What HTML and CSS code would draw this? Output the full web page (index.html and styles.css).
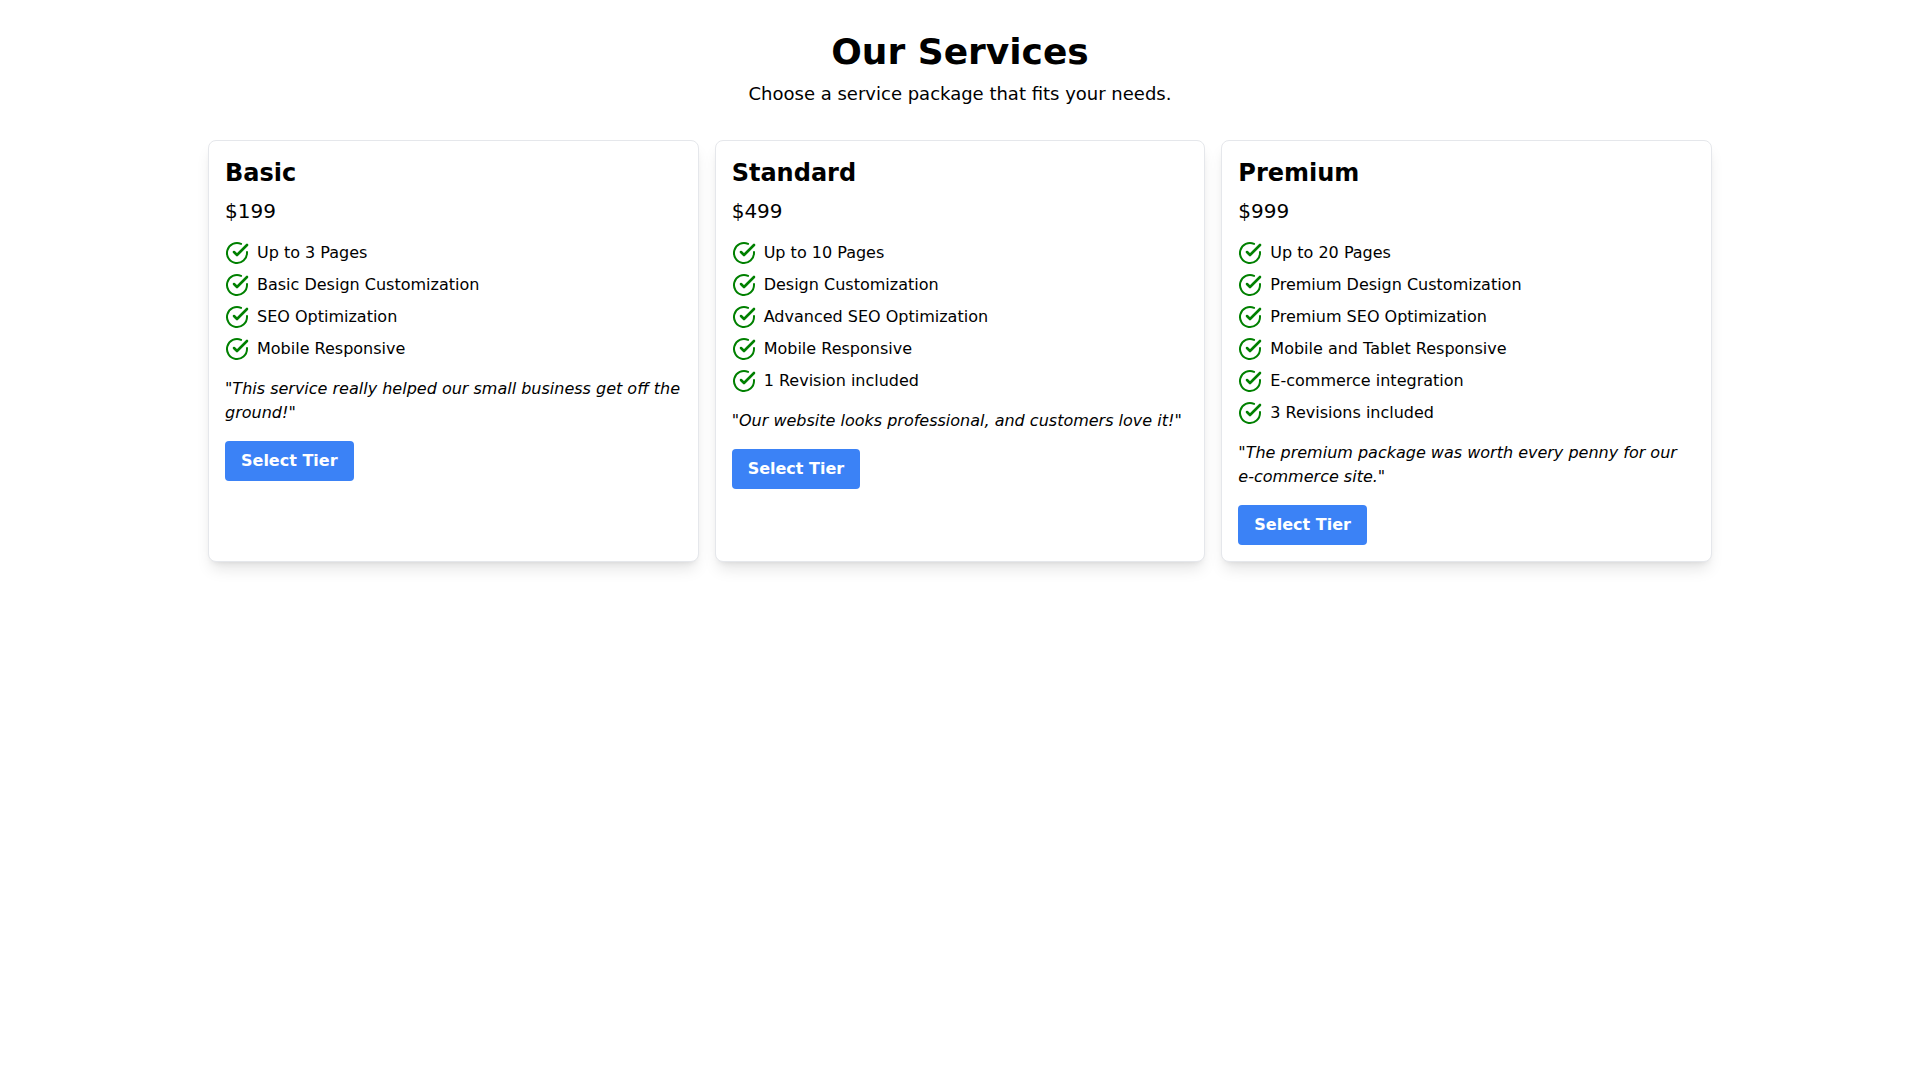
FILE: index.html
```html
<!DOCTYPE html>
<html>
<head>
    <title>Our Services</title>
    <link rel="stylesheet" href="styles.css">
</head>
<body>
    <svg class="icon-defs" width="0" height="0">
        <symbol id="check-circle" viewBox="0 0 24 24">
            <path d="M22 11.08V12a10 10 0 1 1-5.93-9.14"></path>
            <polyline class="tick" points="22 4 12 14.01 9 11.01"></polyline>
        </symbol>
    </svg>
    <div class="container">
        <h1>Our Services</h1>
        <p class="subtitle">Choose a service package that fits your needs.</p>
        <div class="cards">
            <div class="card">
                <h2>Basic</h2>
                <p class="price">$199</p>
                <ul class="features">
                    <li><svg class="check"><use href="#check-circle"></use></svg>Up to 3 Pages</li>
                    <li><svg class="check"><use href="#check-circle"></use></svg>Basic Design Customization</li>
                    <li><svg class="check"><use href="#check-circle"></use></svg>SEO Optimization</li>
                    <li><svg class="check"><use href="#check-circle"></use></svg>Mobile Responsive</li>
                </ul>
                <p class="quote">"This service really helped our small business get off the ground!"</p>
                <button>Select Tier</button>
            </div>
            <div class="card">
                <h2>Standard</h2>
                <p class="price">$499</p>
                <ul class="features">
                    <li><svg class="check"><use href="#check-circle"></use></svg>Up to 10 Pages</li>
                    <li><svg class="check"><use href="#check-circle"></use></svg>Design Customization</li>
                    <li><svg class="check"><use href="#check-circle"></use></svg>Advanced SEO Optimization</li>
                    <li><svg class="check"><use href="#check-circle"></use></svg>Mobile Responsive</li>
                    <li><svg class="check"><use href="#check-circle"></use></svg>1 Revision included</li>
                </ul>
                <p class="quote">"Our website looks professional, and customers love it!"</p>
                <button>Select Tier</button>
            </div>
            <div class="card">
                <h2>Premium</h2>
                <p class="price">$999</p>
                <ul class="features">
                    <li><svg class="check"><use href="#check-circle"></use></svg>Up to 20 Pages</li>
                    <li><svg class="check"><use href="#check-circle"></use></svg>Premium Design Customization</li>
                    <li><svg class="check"><use href="#check-circle"></use></svg>Premium SEO Optimization</li>
                    <li><svg class="check"><use href="#check-circle"></use></svg>Mobile and Tablet Responsive</li>
                    <li><svg class="check"><use href="#check-circle"></use></svg>E-commerce integration</li>
                    <li><svg class="check"><use href="#check-circle"></use></svg>3 Revisions included</li>
                </ul>
                <p class="quote">"The premium package was worth every penny for our e-commerce site."</p>
                <button>Select Tier</button>
            </div>
        </div>
    </div>
</body>
</html>
```

FILE: styles.css
```css
* {
    box-sizing: border-box;
}
body {
    font-family: "DejaVu Sans", sans-serif;
    font-size: 16px;
    line-height: 24px;
    margin: 0;
    background: white;
    color: black;
}
.icon-defs {
    position: absolute;
}
.container {
    max-width: 1536px;
    margin: 0 auto;
    padding: 32px 16px;
}
h1 {
    font-size: 36px;
    line-height: 40px;
    font-weight: bold;
    text-align: center;
    margin: 0;
}
.subtitle {
    font-size: 18px;
    line-height: 28px;
    text-align: center;
    margin: 8px 0 32px;
}
.cards {
    display: grid;
    grid-template-columns: repeat(3, 1fr);
    gap: 16px;
}
.card {
    background: white;
    padding: 16px;
    border: 1px solid #e5e7eb;
    border-radius: 8px;
    box-shadow: 0 10px 15px -3px rgba(0,0,0,0.1), 0 4px 6px -4px rgba(0,0,0,0.1);
}
h2 {
    font-size: 24px;
    line-height: 32px;
    font-weight: bold;
    margin: 0;
}
.price {
    font-size: 20px;
    line-height: 28px;
    margin: 8px 0 0;
}
.features {
    list-style: none;
    margin: 16px 0 0;
    padding: 0;
}
.features li {
    display: flex;
    align-items: center;
    gap: 8px;
    margin-bottom: 8px;
}
.features li:last-child {
    margin-bottom: 0;
}
.check {
    width: 24px;
    height: 24px;
    flex-shrink: 0;
    fill: none;
    stroke: green;
    stroke-width: 2;
    stroke-linecap: round;
    stroke-linejoin: round;
}
.tick {
    stroke-width: 2.6;
}
.quote {
    font-style: oblique;
    margin: 16px 0 0;
}
button {
    display: block;
    font-family: inherit;
    font-size: 16px;
    line-height: 24px;
    font-weight: bold;
    margin-top: 16px;
    padding: 8px 16px;
    background: #3b82f6;
    color: white;
    border: none;
    border-radius: 4px;
    cursor: pointer;
}
```
